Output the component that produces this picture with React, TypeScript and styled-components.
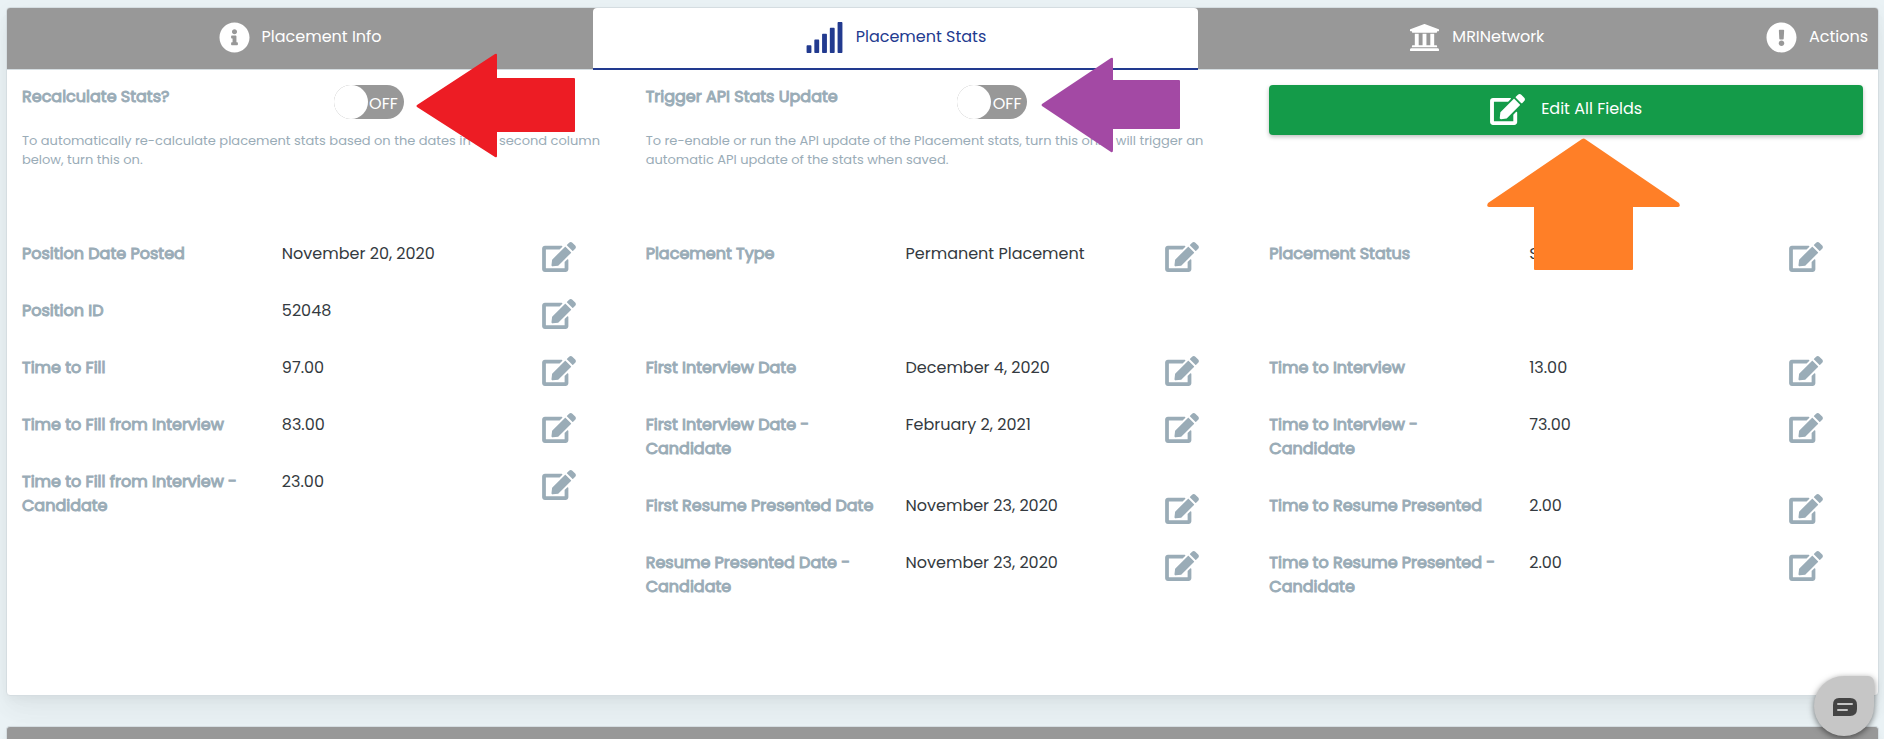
import React, { useState } from "react";
import styled, { createGlobalStyle, css } from "styled-components";
import {
  FaEdit,
  FaExclamationCircle,
  FaInfoCircle,
  FaSignal,
  FaUniversity,
} from "react-icons/fa";

const GlobalStyle = createGlobalStyle`
  *, *::before, *::after { box-sizing: border-box; }
  body {
    margin: 0;
    background: #eaf2f5;
    color: #343a40;
    font-family: Poppins, Inter, "Noto Sans", sans-serif;
    font-size: 16px;
    line-height: 24px;
  }
  button { font: inherit; }
`;

const muted = "#9aacb7";
const grey = "#989898";
const navy = "#223a8f";

const Page = styled.div`
  min-height: 100vh;
  padding: 7px 5px 0 6px;
  display: flex;
  flex-direction: column;
  gap: 30px;
  overflow: hidden;
`;

const Card = styled.section`
  background: #fff;
  border: 1px solid #d5dde1;
  border-radius: 4px;
  box-shadow: 0 8px 35px rgba(4, 9, 20, 0.03), 0 15px 22px rgba(4, 9, 20, 0.03),
    0 4px 8px rgba(4, 9, 20, 0.03);
`;

const NextCard = styled(Card)`
  flex: 1;
  min-height: 12px;
  background: ${grey};
  border-bottom: 0;
  border-radius: 4px 4px 0 0;
`;

const Tabs = styled.div`
  display: flex;
  background: ${grey};
  border-bottom: 1px solid #d5dde1;
  border-radius: 3px 3px 0 0;
`;

const Tab = styled.button<{ $active?: boolean; $compact?: boolean }>`
  flex: ${(p) => (p.$compact ? "0 0 auto" : "1 1 auto")};
  display: flex;
  align-items: center;
  justify-content: center;
  gap: 12px;
  height: 61px;
  padding: 0 10px 3px;
  border: 0;
  background: transparent;
  color: #fff;
  cursor: pointer;

  ${(p) =>
    p.$active &&
    css`
      height: 62px;
      margin-bottom: -1px;
      padding-bottom: 2px;
      background: #fff;
      color: ${navy};
      border-bottom: 2px solid ${navy};
      border-radius: 4px 4px 0 0;
    `}

  svg {
    flex: none;
    height: 31px;
    width: ${(p) => (p.$active ? 39 : 31)}px;
  }
`;

const Columns = styled.div`
  display: grid;
  grid-template-columns: repeat(3, minmax(0, 1fr));
  padding: 15px 0 63px;
`;

const Intro = styled.div`
  min-height: 157px;
  padding: 0 15px;
  position: relative;
`;

const SwitchRow = styled.div`
  display: grid;
  grid-template-columns: 1fr 1fr;
  column-gap: 30px;
  height: 46px;
`;

/* Regular letter widths with a thickened outline. */
const heavy = css`
  color: ${muted};
  font-weight: 400;
  -webkit-text-stroke: 0.06em ${muted};
`;

const Label = styled.label`
  ${heavy}
`;

const SwitchCell = styled.div`
  position: relative;
`;

const Switch = styled.div`
  position: relative;
  display: flex;
  align-items: center;
  justify-content: flex-end;
  width: 70px;
  height: 34px;
  padding: 3px 6px 0 8px;
  border-radius: 17px;
  background: ${grey};
  color: #fff;

  &::before {
    content: "";
    position: absolute;
    inset: 0 auto 0 0;
    width: 34px;
    border-radius: 17px;
    background: #fff;
  }

  &:has(input:checked) {
    justify-content: flex-start;
  }

  &:has(input:checked)::before {
    inset: 0 0 0 auto;
  }

  input {
    position: absolute;
    inset: 0;
    width: 100%;
    height: 100%;
    margin: 0;
    opacity: 0;
    cursor: pointer;
  }
`;

const Help = styled.p`
  margin: 0;
  color: ${muted};
  font-size: 13px;
  line-height: 19px;
`;

const EditAll = styled.button`
  display: flex;
  align-items: center;
  justify-content: center;
  gap: 16px;
  width: 100%;
  height: 50px;
  padding: 0 0 2px;
  border: 0;
  border-radius: 4px;
  background: #149b49;
  color: #fff;
  box-shadow: 0 2px 4px rgba(0, 0, 0, 0.25);
  cursor: pointer;

  svg {
    width: 35px;
    height: 31px;
  }
`;

const Field = styled.div`
  display: grid;
  grid-template-columns: 5fr 5fr 2fr;
  align-items: start;
  min-height: 57px;
`;

const FieldLabel = styled.div`
  padding: 0 15px 33px;
  ${heavy}
`;

const FieldValue = styled.div`
  padding: 0 15px;
`;

const EditButton = styled.button`
  display: block;
  height: 30px;
  margin: 0 15px;
  padding: 0;
  border: 0;
  background: none;
  color: ${muted};
  cursor: pointer;

  svg {
    display: block;
    width: 34px;
    height: 30px;
  }
`;

const Blank = styled.div`
  height: 57px;
`;

const Arrow = styled.svg<{ $left: number; $top: number }>`
  position: absolute;
  left: ${(p) => p.$left}px;
  top: ${(p) => p.$top}px;
  pointer-events: none;
  z-index: 1;
`;

const Chat = styled.button`
  position: fixed;
  right: 10px;
  bottom: 3px;
  display: grid;
  place-items: center;
  width: 60px;
  height: 60px;
  padding: 2px 0 0 2px;
  border: 0;
  border-radius: 30px 6px 30px 30px;
  background: #c6c6c6;
  box-shadow: 0 2px 6px rgba(0, 0, 0, 0.5);
  cursor: pointer;
  z-index: 2;
`;

type Entry = { label: string; value: string } | null;

const positionFields: Entry[] = [
  { label: "Position Date Posted", value: "November 20, 2020" },
  { label: "Position ID", value: "52048" },
  { label: "Time to Fill", value: "97.00" },
  { label: "Time to Fill from Interview", value: "83.00" },
  { label: "Time to Fill from Interview - Candidate", value: "23.00" },
];

const dateFields: Entry[] = [
  { label: "Placement Type", value: "Permanent Placement" },
  null,
  { label: "First Interview Date", value: "December 4, 2020" },
  { label: "First Interview Date - Candidate", value: "February 2, 2021" },
  { label: "First Resume Presented Date", value: "November 23, 2020" },
  { label: "Resume Presented Date - Candidate", value: "November 23, 2020" },
];

const durationFields: Entry[] = [
  { label: "Placement Status", value: "Started" },
  null,
  { label: "Time to Interview", value: "13.00" },
  { label: "Time to Interview - Candidate", value: "73.00" },
  { label: "Time to Resume Presented", value: "2.00" },
  { label: "Time to Resume Presented - Candidate", value: "2.00" },
];

function Fields({ items }: { items: Entry[] }) {
  return (
    <>
      {items.map((item, i) =>
        item ? (
          <Field key={item.label}>
            <FieldLabel>{item.label}</FieldLabel>
            <FieldValue>{item.value}</FieldValue>
            <EditButton type="button" aria-label={`Edit ${item.label}`}>
              <FaEdit />
            </EditButton>
          </Field>
        ) : (
          <Blank key={i} />
        )
      )}
    </>
  );
}

function Toggle({ id }: { id: string }) {
  const [on, setOn] = useState(false);
  return (
    <Switch>
      <span aria-hidden="true">{on ? "ON" : "OFF"}</span>
      <input
        id={id}
        type="checkbox"
        role="switch"
        checked={on}
        onChange={(e) => setOn(e.target.checked)}
      />
    </Switch>
  );
}

export default function App() {
  return (
    <>
      <GlobalStyle />
      <Page>
        <Card>
          <Tabs role="tablist">
            <Tab role="tab" type="button">
              <FaInfoCircle />
              Placement Info
            </Tab>
            <Tab role="tab" type="button" aria-selected="true" $active>
              <FaSignal />
              Placement Stats
            </Tab>
            <Tab role="tab" type="button">
              <FaUniversity />
              MRINetwork
            </Tab>
            <Tab role="tab" type="button" $compact>
              <FaExclamationCircle />
              Actions
            </Tab>
          </Tabs>
          <Columns>
            <div>
              <Intro>
                <SwitchRow>
                  <Label htmlFor="recalculate">Recalculate Stats?</Label>
                  <SwitchCell>
                    <Toggle id="recalculate" />
                    <Arrow $left={82} $top={-32} width="159" height="105" aria-hidden="true">
                      <path
                        d="M1 52 79 1Q81 0 81 2V25H158Q159 25 159 26V78Q159 79 158 79H81V103Q81 105 79 104L1 54Q0 53 1 52Z"
                        fill="#ed1c24"
                      />
                    </Arrow>
                  </SwitchCell>
                </SwitchRow>
                <Help>
                  To automatically re-calculate placement stats based on the dates in the second
                  column below, turn this on.
                </Help>
              </Intro>
              <Fields items={positionFields} />
            </div>
            <div>
              <Intro>
                <SwitchRow>
                  <Label htmlFor="trigger">Trigger API Stats Update</Label>
                  <SwitchCell>
                    <Toggle id="trigger" />
                    <Arrow $left={84} $top={-28} width="139" height="96" aria-hidden="true">
                      <path
                        d="M1 47 70 1Q72 0 72 2V23H138Q139 23 139 24V71Q139 72 138 72H72V93Q72 96 70 95L1 49Q0 48 1 47Z"
                        fill="#a349a4"
                      />
                    </Arrow>
                  </SwitchCell>
                </SwitchRow>
                <Help>
                  To re-enable or run the API update of the Placement stats, turn this on. It will
                  trigger an automatic API update of the stats when saved.
                </Help>
              </Intro>
              <Fields items={dateFields} />
            </div>
            <div>
              <Intro>
                <EditAll type="button">
                  <FaEdit />
                  Edit All Fields
                </EditAll>
                <Arrow $left={233} $top={53} width="193" height="132" aria-hidden="true">
                  <path
                    d="M95 1Q97 0 98 1L192 65Q194 69 191 69H146V131Q146 132 145 132H48Q47 132 47 131V69H2Q-1 69 1 65Z"
                    fill="#ff7f27"
                  />
                </Arrow>
              </Intro>
              <Fields items={durationFields} />
            </div>
          </Columns>
        </Card>
        <NextCard />
      </Page>
      <Chat type="button" aria-label="Open chat">
        <svg width="24" height="18" viewBox="0 0 24 18">
          <path d="M6 0H17Q24 0 24 7V11Q24 18 17 18H0V7Q0 0 6 0Z" fill="#444" />
          <path d="M5 6H19M5 12H14" stroke="#c6c6c6" strokeWidth="2" strokeLinecap="round" />
        </svg>
      </Chat>
    </>
  );
}
